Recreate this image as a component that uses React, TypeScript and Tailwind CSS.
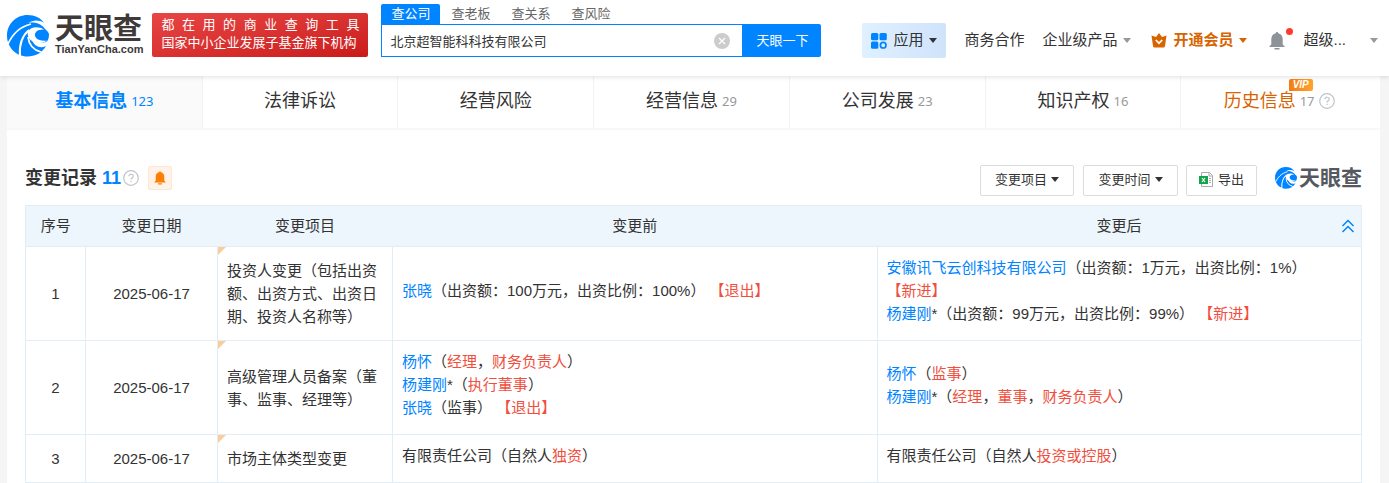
import type { ReactNode } from 'react';

const searchTabs = ['查公司', '查老板', '查关系', '查风险'];

const sections = [
  { name: '基本信息', count: 123, active: true },
  { name: '法律诉讼' },
  { name: '经营风险' },
  { name: '经营信息', count: 29 },
  { name: '公司发展', count: 23 },
  { name: '知识产权', count: 16 },
  { name: '历史信息', count: 17, vip: true },
];

const Person = ({ children }: { children: ReactNode }) => (
  <a href="#" className="text-[#0084ff]">{children}</a>
);

const Mark = ({ children }: { children: ReactNode }) => (
  <em className="inline-block text-[#f04f3e] not-italic">{children}</em>
);

const records = [
  {
    id: 1,
    date: '2025-06-17',
    item: '投资人变更（包括出资额、出资方式、出资日期、投资人名称等）',
    before: [
      <><Person>张晓</Person>（出资额：100万元，出资比例：100%） <Mark>【退出】</Mark></>,
    ],
    after: [
      <><Person>安徽讯飞云创科技有限公司</Person>（出资额：1万元，出资比例：1%）</>,
      <Mark>【新进】</Mark>,
      <><Person>杨建刚</Person>*（出资额：99万元，出资比例：99%） <Mark>【新进】</Mark></>,
    ],
  },
  {
    id: 2,
    date: '2025-06-17',
    item: '高级管理人员备案（董事、监事、经理等）',
    before: [
      <><Person>杨怀</Person>（<Mark>经理</Mark>，<Mark>财务负责人</Mark>）</>,
      <><Person>杨建刚</Person>*（<Mark>执行董事</Mark>）</>,
      <><Person>张晓</Person>（监事） <Mark>【退出】</Mark></>,
    ],
    after: [
      <><Person>杨怀</Person>（<Mark>监事</Mark>）</>,
      <><Person>杨建刚</Person>*（<Mark>经理</Mark>，<Mark>董事</Mark>，<Mark>财务负责人</Mark>）</>,
    ],
  },
  {
    id: 3,
    date: '2025-06-17',
    item: '市场主体类型变更',
    before: [<>有限责任公司（自然人<Mark>独资</Mark>）</>],
    after: [<>有限责任公司（自然人<Mark>投资或控股</Mark>）</>],
  },
];

function Swirl({ className }: { className: string }) {
  return (
    <svg viewBox="0 0 42 42" className={className} aria-hidden="true">
      <path
        fill="#0084ff"
        d="M20.500 0C28 0 34 3 37 8C32 4.500 26 5 21 8C28 6.500 35 9 38 14C40 16 41.500 17 42 19C42 23 41 26 39 27C34 28.500 28 27.500 25 25C27 31 33 34 39 31C35 38 28 41.500 20.500 41.500C9 41.500 0 32 0 20.700C0 9 9 0 20.500 0Z"
      />
      <path d="M25 26C20 23 19 16 24 13.500C28 11.500 33 12 37 14.500C31 14 27.500 17 28 20.500C28.500 24 33 26.500 40 25.500C35 29 29 29 25 26Z" fill="#fff" />
      <path d="M1 29C5 20 12 12 24 9" fill="none" stroke="#fff" strokeWidth="1.800" />
      <path d="M13 41C12 30 15 21 22 15" fill="none" stroke="#fff" strokeWidth="2" />
      <path d="M21 22C22 30 26 35 34 37" fill="none" stroke="#fff" strokeWidth="1.800" />
    </svg>
  );
}

function Caret({ className = '' }: { className?: string }) {
  return (
    <svg viewBox="0 0 8 5" className={`h-[5px] w-2 ${className}`} fill="currentColor" aria-hidden="true">
      <path d="M0 0h8L4 5z" />
    </svg>
  );
}

function Help() {
  return (
    <svg viewBox="0 0 16 16" className="size-4 shrink-0" fill="none" stroke="#bfc3c9" aria-hidden="true">
      <circle cx="8" cy="8" r="7.3" strokeWidth="1.2" />
      <path d="M5.900 6.300c0-2.900 4.300-2.600 4.300-.1C10.200 7.700 8 7.700 8 9.500M8 10.800v1.300" strokeWidth="1.2" />
    </svg>
  );
}

function Bell({ className }: { className: string }) {
  return (
    <svg viewBox="0 0 16 18" className={className} fill="currentColor" aria-hidden="true">
      <path d="M8 0c.7 0 1.200.5 1.200 1.200C12 1.800 13.700 4 13.700 7v5.500l1.800 1.700v.8H.5v-.8l1.800-1.700V7c0-3 1.700-5.200 4.500-5.800C6.800.5 7.300 0 8 0zM5.500 16h5v1.500h-5z" />
    </svg>
  );
}

function Header() {
  return (
    <header className="relative z-10 flex h-[76px] items-start bg-white pl-[7px] shadow-[0_1px_5px_rgba(0,0,0,0.12)]">
      <a href="#" className="mt-[15px] flex shrink-0 items-start gap-1.5">
        <Swirl className="size-[42px]" />
        <span className="flex flex-col text-[#3e3a39]">
          <span className="text-[29px] leading-7 font-bold">天眼查</span>
          <span className="text-[11px] leading-3 font-bold">TianYanCha.com</span>
        </span>
      </a>
      <div className="mt-[13px] ml-[9px] h-11 w-[216px] shrink-0 rounded-xs bg-gradient-to-br from-[#e84545] to-[#ca1a1a] px-[9px] py-[3px] text-[13px] leading-[18px] text-white">
        <p className="[text-align-last:justify]">都 在 用 的 商 业 查 询 工 具</p>
        <p className="whitespace-nowrap">国家中小企业发展子基金旗下机构</p>
      </div>

      <form className="mt-1 ml-[13px] w-[440px] shrink-0 text-[13px]">
        <div className="flex h-5">
          {searchTabs.map((tab, i) => (
            <button
              key={tab}
              type="button"
              className={i === 0 ? 'rounded-t-xs bg-[#0084ff] px-2.5 text-white' : 'px-2.5 text-[#666] first:ml-0 ml-px'}
            >
              {tab}
            </button>
          ))}
        </div>
        <div className="flex h-[33px]">
          <div className="flex flex-1 items-center border border-[#0084ff] pr-3">
            <input
              type="text"
              aria-label="查公司"
              defaultValue="北京超智能科科技有限公司"
              className="h-full min-w-0 flex-1 pl-2 text-[#333] outline-none"
            />
            <button type="reset" aria-label="清空">
              <svg viewBox="0 0 16 16" className="size-4">
                <circle cx="8" cy="8" r="8" fill="#ccc" />
                <path d="M5 5l6 6M11 5l-6 6" stroke="#fff" strokeWidth="1.3" />
              </svg>
            </button>
          </div>
          <button type="submit" className="w-[78px] rounded-r-xs bg-[#0084ff] text-white">天眼一下</button>
        </div>
      </form>

      <nav className="mt-[23px] ml-auto flex h-[35px] items-center pr-[11px] text-[15px] whitespace-nowrap text-[#333]">
        <button className="flex h-full w-[84px] items-center justify-center gap-1.5 rounded-xs bg-gradient-to-r from-[#e0f0ff] to-[#cfe3fb]">
          <svg viewBox="0 0 16 16" className="size-4" fill="#0084ff" aria-hidden="true">
            <rect width="7.3" height="7.3" rx="1.5" />
            <rect x="8.500" width="7.3" height="7.3" rx="1.5" />
            <rect y="8.500" width="7.3" height="7.3" rx="1.5" />
            <circle cx="12.200" cy="12.200" r="2.800" fill="none" stroke="#0084ff" strokeWidth="1.7" />
          </svg>
          应用
          <Caret />
        </button>
        <a href="#" className="ml-[18px]">商务合作</a>
        <button className="ml-[18px] flex items-center gap-1.5">企业级产品<Caret className="text-[#999]" /></button>
        <button className="ml-5 flex items-center gap-1.5 font-bold text-[#d86400]">
          <svg viewBox="0 0 16 15" className="h-[15px] w-4" aria-hidden="true">
            <path fill="currentColor" d="M8 0l3 4 4.500-1.500L14 13q-.2 1.500-1.500 1.500h-9Q2.200 14.500 2 13L.5 2.500 5 4z" />
            <path d="M4.800 7l3.200 3.200L11.200 7" fill="none" stroke="#fff" strokeWidth="1.7" />
          </svg>
          开通会员
          <Caret />
        </button>
        <button aria-label="消息" className="relative ml-[22px]">
          <Bell className="h-[18px] w-4 text-[#8e9399]" />
          <i className="absolute -top-1 -right-2 size-[7px] rounded-full bg-[#ff3b30]" />
        </button>
        <button className="ml-[18px] flex items-center gap-6">超级...<Caret className="text-[#999]" /></button>
      </nav>
    </header>
  );
}

function SectionTabs() {
  return (
    <nav className="grid grid-cols-7 border-b-2 border-[#f8f8f8] pr-[3px]">
      {sections.map((s) => (
        <a
          key={s.name}
          href="#"
          className={`flex h-[52px] items-center justify-center gap-1 border-r border-[#f3f3f3] pb-0.5 text-lg last:border-r-0 ${
            s.active ? 'bg-[#fafafa] font-bold text-[#0084ff]' : s.vip ? 'text-[#d86400]' : 'text-[#333]'
          }`}
        >
          <span className="relative">
            {s.name}
            {s.vip && (
              <b className="absolute -top-2 -right-[17px] flex h-3 w-6 items-center justify-center rounded-xs rounded-bl-none bg-gradient-to-r from-[#f57c12] to-[#ffa32e] font-[Liberation_Sans] text-[10px] text-white italic">
                VIP
              </b>
            )}
          </span>
          {s.count && (
            <span className={`font-['Noto_Sans'] text-[13px] font-normal ${s.active ? 'text-[#0084ff]' : 'text-[#999]'}`}>
              {s.count}
            </span>
          )}
          {s.vip && <Help />}
        </a>
      ))}
    </nav>
  );
}

function Toolbar() {
  const button = 'flex h-[31px] items-center justify-center gap-1 rounded-xs border border-[#dcdcdc] pb-0.5 text-[13px]';
  return (
    <div className="flex items-start pt-[35px] pb-[9px]">
      <div className="flex h-[26px] items-center">
        <h2 className="text-lg leading-6 font-bold">
          变更记录 <span className="text-[#0084ff]">11</span>
        </h2>
        <span className="ml-0.5"><Help /></span>
        <button aria-label="订阅" className="ml-[9px] flex size-6 items-center justify-center rounded-xs border border-[#ffe6d1] bg-[#fff3e9]">
          <Bell className="h-3.5 w-3 text-[#ff7d00]" />
        </button>
      </div>
      <div className="ml-auto flex items-start">
        <button className={`${button} w-[94px]`}>变更项目<Caret /></button>
        <button className={`${button} ml-[9px] w-[95px]`}>变更时间<Caret /></button>
        <button className={`${button} ml-2 w-[71px]`}>
          <svg viewBox="0 0 15 15" className="size-[15px]" aria-hidden="true">
            <path d="M2.500.5h8l3 3v11h-11z" fill="#fff" stroke="#aaa" />
            <path d="M10 .5V4h3.500M10 6.500h2M10 8.500h2M10 10.500h2" fill="none" stroke="#aaa" />
            <path d="M0 4h9v8H0z" fill="#13a34a" />
            <path d="M3 6l3 4M6 6l-3 4" stroke="#fff" strokeWidth="1.2" />
          </svg>
          导出
        </button>
        <span className="ml-[18px] flex h-[26px] items-center gap-0.5 text-[21px] leading-6 font-bold text-[#55585f]">
          <Swirl className="size-[22px]" />
          天眼查
        </span>
      </div>
    </div>
  );
}

function RecordTable() {
  const cell = 'border border-[#e1edf7]';
  const value = `${cell} px-[9px] pt-[9px] pb-[15px]`;
  return (
    <table className="w-full table-fixed border-collapse text-[15px] leading-[23px]">
      <colgroup>
        <col className="w-[60px]" />
        <col className="w-[132px]" />
        <col className="w-[175px]" />
        <col />
        <col />
      </colgroup>
      <thead>
        <tr className="border border-[#e1edf7] bg-[#eef6fd]">
          <th className="pt-2 pb-[9px] font-normal">序号</th>
          <th className="pt-2 pb-[9px] font-normal">变更日期</th>
          <th className="pt-2 pb-[9px] font-normal">变更项目</th>
          <th className="pt-2 pb-[9px] font-normal">变更前</th>
          <th className="pt-2 pb-[9px] font-normal">
            <div className="flex items-center">
              <span className="flex-1 pl-5">变更后</span>
              <button aria-label="收起" className="pr-1.5">
                <svg viewBox="0 0 14 14" className="size-3.5" fill="none" stroke="#0084ff" strokeWidth="1.5">
                  <path d="M1.500 7L7 1.500 12.500 7M1.500 13L7 7.500 12.500 13" />
                </svg>
              </button>
            </div>
          </th>
        </tr>
      </thead>
      <tbody>
        {records.map((r) => (
          <tr key={r.id}>
            <td className={`${cell} text-center`}>{r.id}</td>
            <td className={`${cell} text-center`}>{r.date}</td>
            <td className={`${cell} relative px-[9px] py-3`}>
              <i className="absolute top-0 left-0 size-2 bg-[#facd9c] [clip-path:polygon(0_0,100%_0,0_100%)]" />
              {r.item}
            </td>
            <td className={value}>{r.before.map((line, i) => <div key={i}>{line}</div>)}</td>
            <td className={value}>{r.after.map((line, i) => <div key={i}>{line}</div>)}</td>
          </tr>
        ))}
      </tbody>
    </table>
  );
}

export default function App() {
  return (
    <div className="min-h-screen bg-[#f5f5f5] font-['Liberation_Sans','Noto_Sans_CJK_SC',sans-serif] text-[#333]">
      <Header />
      <main className="mr-[9px] ml-[7px] bg-white">
        <SectionTabs />
        <section className="px-[18px]">
          <Toolbar />
          <RecordTable />
        </section>
      </main>
    </div>
  );
}
